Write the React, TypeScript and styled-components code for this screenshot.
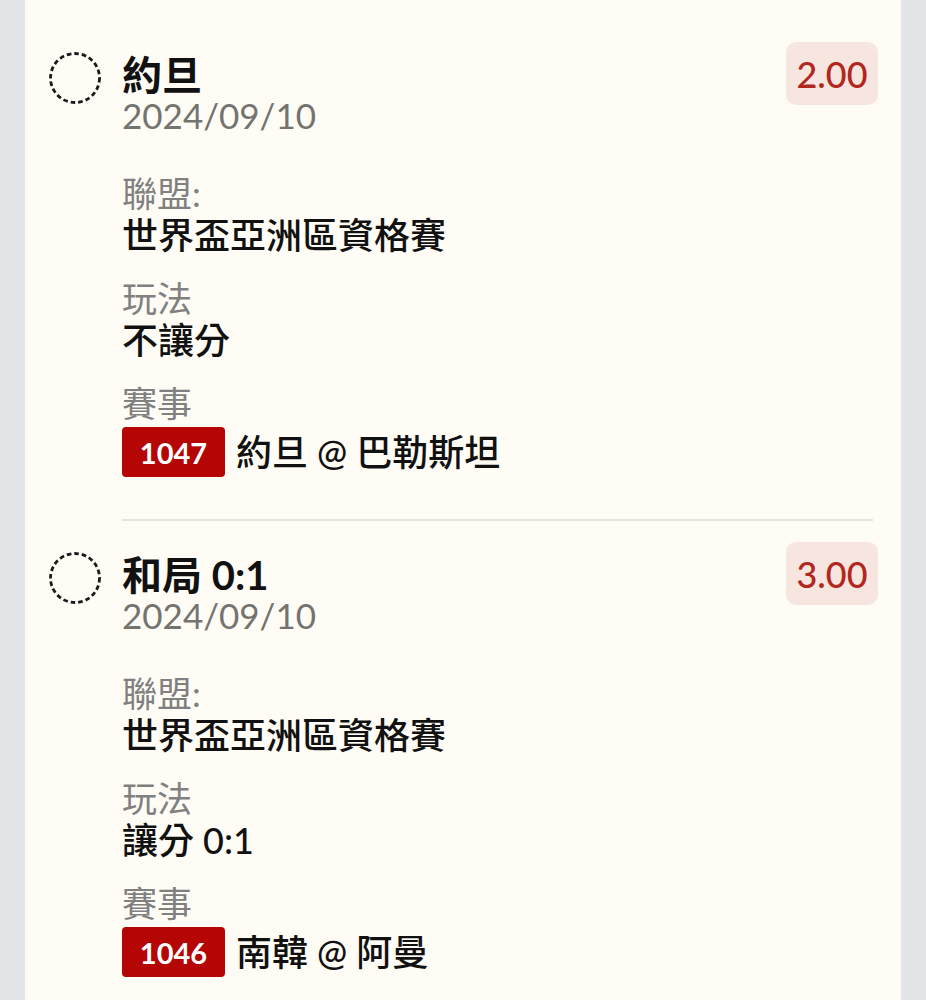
import React from "react";
import styled, { createGlobalStyle } from "styled-components";

const GlobalStyle = createGlobalStyle`
  html, body {
    margin: 0;
    padding: 0;
    background: #e4e5e9;
  }
  body {
    font-family: Lato, "Noto Sans CJK TC", "Noto Sans", sans-serif;
    color: #141414;
  }
`;

const Page = styled.div`
  padding: 0 25px;
  min-height: 1000px;
`;

const Card = styled.div`
  background: #fefcf4;
  padding-top: 21px;
  min-height: 1000px;
`;

const Item = styled.div`
  display: flex;
  align-items: flex-start;
  padding: 21px 23px 42px 24px;
`;

const Radio = styled.svg`
  flex: none;
  width: 52px;
  height: 52px;
  margin-top: 10px;
  margin-right: 21px;
`;

const Content = styled.div`
  flex: 1;
  display: flex;
  flex-direction: column;
  padding-top: 12px;
`;

const Title = styled.div`
  font-size: 40px;
  line-height: 42px;
  font-weight: 700;
  color: #111;
`;

const DateText = styled.div`
  font-size: 35px;
  line-height: 38px;
  color: #737370;
  margin-bottom: 38px;
`;

const Field = styled.div`
  display: flex;
  flex-direction: column;
  & + & {
    margin-top: 21px;
  }
`;

const Label = styled.div`
  font-size: 35px;
  line-height: 42px;
  color: #808080;
`;

const Value = styled.div`
  font-size: 36px;
  line-height: 42px;
  font-weight: 500;
  color: #111;
`;

const MatchRow = styled.div`
  display: flex;
  align-items: center;
  gap: 11px;
  margin-top: 3px;
`;

const CodeBadge = styled.span`
  display: inline-flex;
  align-items: center;
  justify-content: center;
  width: 103px;
  height: 50px;
  border-radius: 4px;
  background: #b50505;
  color: #fff;
  font-size: 29px;
  font-weight: 700;
`;

const MatchText = styled.span`
  font-size: 36px;
  line-height: 42px;
  font-weight: 500;
  color: #111;
`;

const Price = styled.div`
  flex: none;
  width: 92px;
  height: 63px;
  border-radius: 10px;
  background: #f6e6df;
  color: #b3261e;
  font-size: 36px;
  font-weight: 500;
  display: flex;
  align-items: center;
  justify-content: center;
`;

const Divider = styled.div`
  height: 2px;
  background: #e6e3dd;
  margin: 0 28px 0 97px;
`;

type Bet = {
  title: string;
  date: string;
  league: string;
  play: string;
  code: string;
  match: string;
  price: string;
};

const bets: Bet[] = [
  {
    title: "約旦",
    date: "2024/09/10",
    league: "世界盃亞洲區資格賽",
    play: "不讓分",
    code: "1047",
    match: "約旦 @ 巴勒斯坦",
    price: "2.00",
  },
  {
    title: "和局 0:1",
    date: "2024/09/10",
    league: "世界盃亞洲區資格賽",
    play: "讓分 0:1",
    code: "1046",
    match: "南韓 @ 阿曼",
    price: "3.00",
  },
];

const DashedCircle = () => (
  <Radio viewBox="0 0 52 52">
    <circle
      cx="26"
      cy="26"
      r="24.5"
      fill="none"
      stroke="#1a1a1a"
      strokeWidth="2.8"
      strokeDasharray="4.6 3"
    />
  </Radio>
);

const BetItem = ({ bet }: { bet: Bet }) => (
  <Item>
    <DashedCircle />
    <Content>
      <Title>{bet.title}</Title>
      <DateText>{bet.date}</DateText>
      <Field>
        <Label>聯盟:</Label>
        <Value>{bet.league}</Value>
      </Field>
      <Field>
        <Label>玩法</Label>
        <Value>{bet.play}</Value>
      </Field>
      <Field>
        <Label>賽事</Label>
        <MatchRow>
          <CodeBadge>{bet.code}</CodeBadge>
          <MatchText>{bet.match}</MatchText>
        </MatchRow>
      </Field>
    </Content>
    <Price>{bet.price}</Price>
  </Item>
);

export default function App() {
  return (
    <Page>
      <GlobalStyle />
      <Card>
        {bets.map((bet, i) => (
          <React.Fragment key={bet.code}>
            {i > 0 && <Divider />}
            <BetItem bet={bet} />
          </React.Fragment>
        ))}
      </Card>
    </Page>
  );
}
